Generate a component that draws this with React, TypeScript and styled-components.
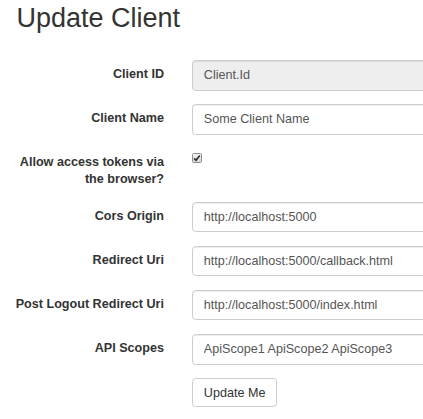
import React from "react";
import styled, { createGlobalStyle } from "styled-components";

const GlobalStyle = createGlobalStyle`
  html, body {
    margin: 0;
    padding: 0;
    background: #fff;
    overflow: hidden;
  }
  body {
    font-family: "Liberation Sans", Arial, sans-serif;
    color: #333;
  }
  * { box-sizing: border-box; }
`;

const Page = styled.div`
  padding: 3.5px 0 0 14px;
  width: 100vw;
  overflow: hidden;
`;

const Title = styled.h2`
  margin: 0 0 26.8px 2.5px;
  font-size: 27px;
  line-height: 29.7px;
  font-weight: 400;
  color: #333;
`;

const Form = styled.form`
  display: flex;
  flex-direction: column;
  gap: 13.5px;
`;

const FormGroup = styled.div`
  display: grid;
  grid-template-columns: 150px 320px;
  column-gap: 28px;
  align-items: start;
`;

const Label = styled.label`
  padding-top: 6px;
  text-align: right;
  font-size: 12.6px;
  line-height: 17px;
  font-weight: 700;
  color: #333;
`;

const Input = styled.input<{ $readOnly?: boolean }>`
  display: block;
  width: 100%;
  height: 30.6px;
  padding: 0 10.8px;
  font-family: "Liberation Sans", Arial, sans-serif;
  font-size: 12.6px;
  color: #555;
  background: ${(p) => (p.$readOnly ? "#eee" : "#fff")};
  border: 1px solid #ccc;
  border-radius: 3.6px;
  box-shadow: inset 0 1px 1px rgba(0, 0, 0, 0.075);
  outline: none;
`;

const CheckCell = styled.div`
  padding-top: 5px;
`;

const CheckBox = styled.span`
  display: block;
  width: 10px;
  height: 10px;
  border: 1px solid #8e8e8e;
  border-radius: 1.5px;
  background: linear-gradient(#f2f2f2, #d6d6d6);
  position: relative;
  svg {
    position: absolute;
    left: 0;
    top: 0;
  }
`;

const Button = styled.button`
  justify-self: start;
  height: 29px;
  padding: 0 10.8px;
  font-family: "Liberation Sans", Arial, sans-serif;
  font-size: 12.6px;
  color: #333;
  background: #fff;
  border: 1px solid #ccc;
  border-radius: 3.6px;
  cursor: pointer;
`;

const fields = [
  { label: "Cors Origin", value: "http://localhost:5000" },
  { label: "Redirect Uri", value: "http://localhost:5000/callback.html" },
  { label: "Post Logout Redirect Uri", value: "http://localhost:5000/index.html" },
  { label: "API Scopes", value: "ApiScope1 ApiScope2 ApiScope3" },
];

export default function App() {
  return (
    <Page>
      <GlobalStyle />
      <Title>Update Client</Title>
      <Form onSubmit={(e) => e.preventDefault()}>
        <FormGroup>
          <Label>Client ID</Label>
          <Input $readOnly readOnly value="Client.Id" />
        </FormGroup>
        <FormGroup>
          <Label>Client Name</Label>
          <Input defaultValue="Some Client Name" />
        </FormGroup>
        <FormGroup>
          <Label>Allow access tokens via the browser?</Label>
          <CheckCell>
            <CheckBox>
              <svg width="8" height="8" viewBox="0 0 8 8">
                <path d="M1.2 4.4 L3 6.2 L6.8 1.6" fill="none" stroke="#2b2b2b" strokeWidth="1.6" />
              </svg>
            </CheckBox>
          </CheckCell>
        </FormGroup>
        {fields.map((f) => (
          <FormGroup key={f.label}>
            <Label>{f.label}</Label>
            <Input defaultValue={f.value} />
          </FormGroup>
        ))}
        <FormGroup>
          <span />
          <Button type="submit">Update Me</Button>
        </FormGroup>
      </Form>
    </Page>
  );
}
